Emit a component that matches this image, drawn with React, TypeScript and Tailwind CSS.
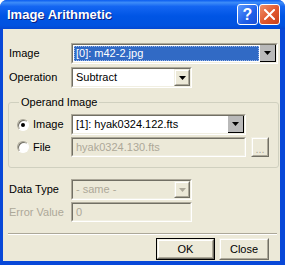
import type { ReactNode } from "react";

const font = "font-['Tahoma','Liberation_Sans',sans-serif]";

function Sunken({ className, children }: { className?: string; children?: ReactNode }) {
  return (
    <div className={`border border-t-[#ACA899] border-l-[#ACA899] border-b-white border-r-white ${className ?? ""}`}>
      <div className="flex h-full border border-t-[#716F64] border-l-[#716F64] border-b-[#F1EFE2] border-r-[#F1EFE2]">
        {children}
      </div>
    </div>
  );
}

function Raised({ className, children }: { className?: string; children?: ReactNode }) {
  return (
    <div className={`border border-t-[#F1EFE2] border-l-[#F1EFE2] border-b-[#716F64] border-r-[#716F64] ${className ?? ""}`}>
      <div className="flex h-full items-center justify-center border border-t-white border-l-white border-b-[#ACA899] border-r-[#ACA899] bg-[#ECE9D8]">
        {children}
      </div>
    </div>
  );
}

function Arrow({ color = "#000" }: { color?: string }) {
  return (
    <svg width="7" height="4" viewBox="0 0 7 4">
      <path d="M0 0h7L3.5 4z" fill={color} />
    </svg>
  );
}

function Combo({
  text,
  width,
  selected,
  hot,
  disabled,
}: {
  text: string;
  width: string;
  selected?: boolean;
  hot?: boolean;
  disabled?: boolean;
}) {
  return (
    <Sunken className={`${width} h-[21px]`}>
      <div className={`flex flex-1 items-center ${disabled ? "bg-[#ECE9D8]" : "bg-white"}`}>
        {selected ? (
          <div className="mx-[1px] flex h-[15px] flex-1 items-center border border-dotted border-[#9CB6E6] bg-[#316AC5] pl-[1px] text-white">
            {text}
          </div>
        ) : (
          <span className={`pl-[3px] ${disabled ? "text-[#ACA899]" : "text-black"}`}>{text}</span>
        )}
      </div>
      {hot ? (
        <div className="flex w-[16px] items-center justify-center border-r border-b border-r-black border-b-black bg-[#B9B9B9]">
          <Arrow />
        </div>
      ) : (
        <Raised className="w-[16px]">
          <Arrow color={disabled ? "#ACA899" : "#000"} />
        </Raised>
      )}
    </Sunken>
  );
}

function Field({ text, width }: { text: string; width: string }) {
  return (
    <Sunken className={`${width} h-[20px]`}>
      <div className="flex flex-1 items-center bg-[#ECE9D8] pl-[3px] text-[#ACA899]">{text}</div>
    </Sunken>
  );
}

function Radio({ checked }: { checked?: boolean }) {
  return (
    <div className="flex h-[12px] w-[12px] items-center justify-center rounded-full border border-t-[#ACA899] border-l-[#ACA899] border-b-white border-r-white bg-white shadow-[inset_1px_1px_0_#716F64]">
      {checked && <div className="h-[4px] w-[4px] rounded-full bg-black" />}
    </div>
  );
}

export default function App() {
  return (
    <div className={`${font} h-[265px] w-[285px] text-[11px] leading-none`}>
      <div className="flex h-full flex-col overflow-hidden rounded-t-[7px] bg-[#0848D8]">
        {/* title bar */}
        <div className="flex h-[29px] shrink-0 items-center bg-[linear-gradient(to_bottom,#0A5CF0_0%,#3D8CF8_9%,#1466F2_22%,#0055E5_55%,#0052E0_88%,#0447D2_100%)] pl-[7px] pr-[5px]">
          <span className="font-['Liberation_Sans',sans-serif] text-[13px] font-bold text-white [text-shadow:1px_1px_0_#0A1E80]">
            Image Arithmetic
          </span>
          <div className="ml-auto flex gap-[1px]">
            <div className="flex h-[21px] w-[21px] items-center justify-center rounded-[3px] border border-white bg-[linear-gradient(135deg,#5C9AFF,#1F5FE8_60%,#1A4FD6)] font-['Liberation_Sans',sans-serif] text-[16px] font-bold text-white">
              ?
            </div>
            <div className="flex h-[21px] w-[21px] items-center justify-center rounded-[3px] border border-white bg-[linear-gradient(135deg,#F0906A,#E0562C_55%,#C8401A)]">
              <svg width="11" height="11" viewBox="0 0 11 11">
                <path d="M1 1l9 9M10 1l-9 9" stroke="#fff" strokeWidth="2" strokeLinecap="square" />
              </svg>
            </div>
          </div>
        </div>

        {/* client area */}
        <div className="mb-[4px] ml-[3px] mr-[5px] flex flex-1 flex-col bg-[#ECE9D8] pt-[14px] text-black">
          <div className="flex h-[21px] items-center">
            <span className="w-[68px] pl-[6px]">Image</span>
            <Combo text="[0]: m42-2.jpg" width="w-[207px]" selected hot />
          </div>
          <div className="mt-[3px] flex h-[21px] items-center">
            <span className="w-[68px] pl-[6px]">Operation</span>
            <Combo text="Subtract" width="w-[121px]" />
          </div>

          <fieldset className="ml-[5px] mt-[7px] w-[271px] rounded-[3px] border border-[#D0D0BF] pb-[10px]">
            <legend className="ml-[10px] px-[2px] leading-[15px]">Operand Image</legend>
            <div className="mt-[4px] flex h-[21px] items-center">
              <div className="flex w-[62px] items-center gap-[4px] pl-[8px]">
                <Radio checked />
                <span>Image</span>
              </div>
              <Combo text="[1]: hyak0324.122.fts" width="w-[175px]" hot />
            </div>
            <div className="mt-[2px] flex h-[20px] items-center">
              <div className="flex w-[62px] items-center gap-[4px] pl-[8px]">
                <Radio />
                <span>File</span>
              </div>
              <Field text="hyak0324.130.fts" width="w-[175px]" />
              <Raised className="ml-[5px] h-[20px] w-[18px]">
                <span className="pt-[4px] text-[#ACA899]">...</span>
              </Raised>
            </div>
          </fieldset>

          <div className="mt-[11px] flex h-[21px] items-center">
            <span className="w-[68px] pl-[6px]">Data Type</span>
            <Combo text="- same -" width="w-[121px]" disabled />
          </div>
          <div className="mt-[2px] flex h-[20px] items-center">
            <span className="w-[68px] pl-[6px] text-[#ACA899]">Error Value</span>
            <Field text="0" width="w-[121px]" />
          </div>

          <div className="ml-[5px] mt-[11px] h-[2px] w-[269px] border-t border-b border-t-[#ACA899] border-b-white" />

          <div className="mt-[3px] flex justify-end gap-[4px] pr-[11px]">
            <div className="h-[22px] w-[59px] border border-black">
              <Raised className="h-full">OK</Raised>
            </div>
            <Raised className="h-[22px] w-[50px]">Close</Raised>
          </div>
        </div>
      </div>
    </div>
  );
}
